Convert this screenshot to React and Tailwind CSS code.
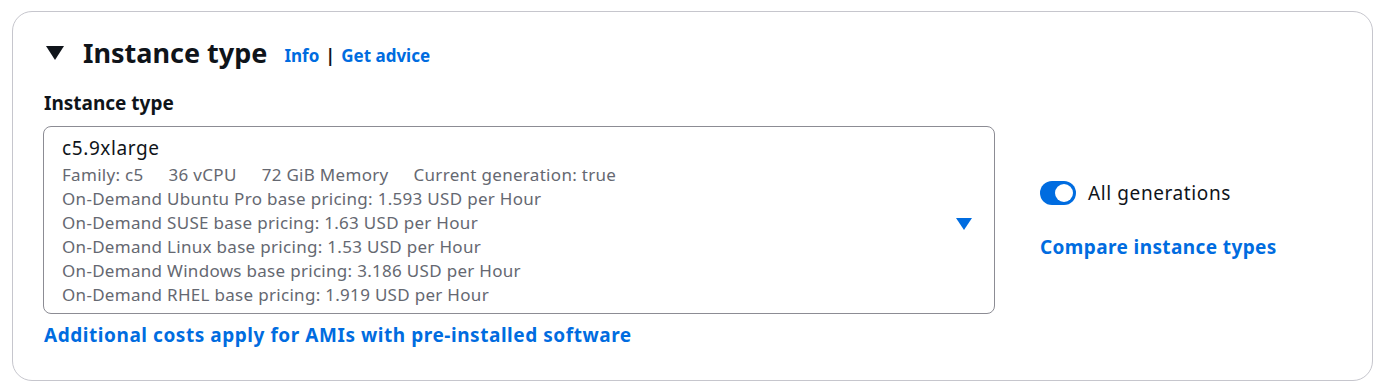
export default function App() {
  const font = { fontFamily: '"Noto Sans", "Open Sans", Arial, sans-serif' };
  return (
    <div className="w-[1380px] h-[388px] bg-white pt-[11px] pl-[12px]" style={font}>
      <div className="w-[1361px] h-[370px] rounded-[20px] border border-[#c6c6cd] bg-white pl-[30px] pt-[21px]">
        <div className="flex items-center h-[40px]">
          <svg width="18" height="14" viewBox="0 0 18 14" className="ml-[3px]">
            <polygon points="0,0 18,0 9,14" fill="#0f141a" />
          </svg>
          <h2 className="ml-[19px] text-[27px] font-bold text-[#0f141a] leading-[40px]">Instance type</h2>
          <a className="ml-[17px] mt-[5px] text-[17px] font-bold text-[#006ce0]">Info</a>
          <span className="mx-[6px] mt-[5px] text-[18px] text-[#0f141a] font-bold">|</span>
          <a className="mt-[5px] text-[17px] font-bold text-[#006ce0]">Get advice</a>
        </div>
        <div className="mt-[17px] text-[19px] font-bold text-[#0f141a] leading-[26px] pl-[1px]">Instance type</div>
        <div className="flex mt-[10px]">
          <div className="w-[952px] h-[188px] rounded-[8px] border border-[#8c8c94] pl-[18px] pt-[8px] flex justify-between">
            <div>
              <div className="text-[19px] tracking-[0.6px] text-[#0f141a] leading-[26px]">c5.9xlarge</div>
              <div className="mt-[2px] text-[17px] tracking-[0.3px] text-[#656871] leading-[24px]">
                <div className="flex gap-[25px]">
                  <span>Family: c5</span>
                  <span>36 vCPU</span>
                  <span>72 GiB Memory</span>
                  <span>Current generation: true</span>
                </div>
                <div>On-Demand Ubuntu Pro base pricing: 1.593 USD per Hour</div>
                <div>On-Demand SUSE base pricing: 1.63 USD per Hour</div>
                <div>On-Demand Linux base pricing: 1.53 USD per Hour</div>
                <div>On-Demand Windows base pricing: 3.186 USD per Hour</div>
                <div>On-Demand RHEL base pricing: 1.919 USD per Hour</div>
              </div>
            </div>
            <div className="flex items-center pr-[22px]">
              <svg width="16" height="12" viewBox="0 0 16 12">
                <polygon points="0,0 16,0 8,12" fill="#006ce0" />
              </svg>
            </div>
          </div>
          <div className="ml-[45px] pt-[53px]">
            <div className="flex items-center">
              <div className="w-[36px] h-[24px] rounded-full bg-[#006ce0] relative">
                <div className="absolute right-[3px] top-[3px] w-[18px] h-[18px] rounded-full bg-white"></div>
              </div>
              <span className="ml-[12px] text-[19px] tracking-[0.6px] text-[#0f141a]">All generations</span>
            </div>
            <a className="block mt-[25px] text-[19px] tracking-[0.4px] font-bold text-[#006ce0]">Compare instance types</a>
          </div>
        </div>
        <a className="block mt-[7px] pl-[1px] text-[19px] tracking-[0.55px] font-bold text-[#006ce0] leading-[28px]">Additional costs apply for AMIs with pre-installed software</a>
      </div>
    </div>
  );
}
